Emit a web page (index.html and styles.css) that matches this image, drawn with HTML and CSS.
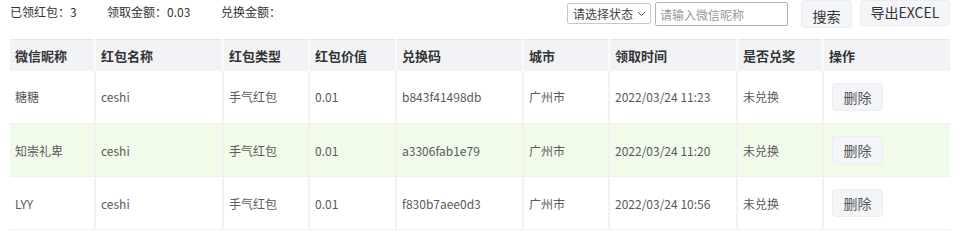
FILE: index.html
```html
<!DOCTYPE html>
<html lang="zh">
<head>
<meta charset="utf-8">
<link rel="stylesheet" href="styles.css">
</head>
<body>
<div class="bar">
  <div class="stats">
    <span class="stat s1">已领红包：3</span>
    <span class="stat s2">领取金额：0.03</span>
    <span class="stat s3">兑换金额：</span>
  </div>
  <div class="tools">
    <div class="select">请选择状态<svg width="9" height="6" viewBox="0 0 9 6"><path d="M1 1l3.5 3.5L8 1" fill="none" stroke="#555" stroke-width="1"/></svg></div>
    <div class="input">请输入微信昵称</div>
    <button class="btn search">搜索</button>
    <button class="btn export">导出EXCEL</button>
  </div>
</div>
<table class="grid">
  <colgroup>
    <col style="width:85px"><col style="width:128px"><col style="width:86px"><col style="width:87px"><col style="width:127px"><col style="width:86px"><col style="width:128px"><col style="width:86px"><col style="width:127px">
  </colgroup>
  <thead>
    <tr><th>微信昵称</th><th>红包名称</th><th>红包类型</th><th>红包价值</th><th>兑换码</th><th>城市</th><th>领取时间</th><th>是否兑奖</th><th>操作</th></tr>
  </thead>
  <tbody>
    <tr><td>糖糖</td><td>ceshi</td><td>手气红包</td><td>0.01</td><td>b843f41498db</td><td>广州市</td><td>2022/03/24 11:23</td><td>未兑换</td><td><button class="btn del">删除</button></td></tr>
    <tr class="hl"><td>知崇礼卑</td><td>ceshi</td><td>手气红包</td><td>0.01</td><td>a3306fab1e79</td><td>广州市</td><td>2022/03/24 11:20</td><td>未兑换</td><td><button class="btn del">删除</button></td></tr>
    <tr><td>LYY</td><td>ceshi</td><td>手气红包</td><td>0.01</td><td>f830b7aee0d3</td><td>广州市</td><td>2022/03/24 10:56</td><td>未兑换</td><td><button class="btn del">删除</button></td></tr>
  </tbody>
</table>
</body>
</html>
```
FILE: styles.css
```css
* { box-sizing: border-box; }
body {
  margin: 0;
  background: #fff;
  font-family: "Noto Sans CJK SC", sans-serif;
  font-size: 12px;
  color: #333;
}
.bar {
  height: 39px;
  display: flex;
  justify-content: space-between;
  align-items: flex-start;
  padding: 0 10px 0 10px;
}
.stats { display: flex; padding-top: 3px; line-height: 18px; font-size: 12px; }
.stat { color: #333; }
.s1 { width: 97px; }
.s2 { width: 114px; }
.tools { display: flex; align-items: flex-start; }
.select {
  margin-top: 3px;
  width: 84px;
  height: 21px;
  border: 1px solid #c8c8c8;
  border-radius: 2px;
  display: flex;
  align-items: center;
  justify-content: space-between;
  padding: 0 4px 0 5px;
  font-size: 12px;
  color: #444;
}
.input {
  margin: 2px 0 0 4px;
  width: 133px;
  height: 24px;
  border: 1px solid #b5b5b5;
  border-radius: 2px;
  padding: 0 4px;
  display: flex;
  align-items: center;
  font-size: 12px;
  color: #999;
}
.btn {
  font-family: "Noto Sans CJK SC", sans-serif;
  background: #f4f5f8;
  border: 1px solid #ebedf0;
  border-radius: 4px;
  color: #333;
  padding: 0;
  cursor: pointer;
}
.search {
  margin-left: 13px;
  width: 51px;
  height: 28px;
  font-size: 14px;
  padding-top: 3px;
}
.export {
  margin-left: 8px;
  width: 90px;
  height: 26px;
  font-size: 14px;
  padding-bottom: 2px;
}
.grid {
  margin-left: 10px;
  width: 940px;
  border-collapse: collapse;
  table-layout: fixed;
}
.grid th {
  height: 31px;
  background: #f2f3f6;
  border-top: 1px solid #e6e7ea;
  border-left: 2px solid #fbfbfc;
  text-align: left;
  font-weight: bold;
  color: #333;
  padding: 0 5px;
  font-size: 13px;
}
.grid th:first-child { border-left: none; }
.grid td {
  height: 53px;
  padding: 0 5px;
  color: #5a5a5a;
  border-left: 2px solid #f2f2f4;
  border-bottom: 1px solid #f0f0f2;
  font-size: 12px;
}
.grid td:first-child { border-left: none; }
.grid tr.hl td { background: #f0fbea; }
.del {
  margin-left: 3px;
  width: 51px;
  height: 28px;
  font-size: 14px;
  color: #555;
}
```
